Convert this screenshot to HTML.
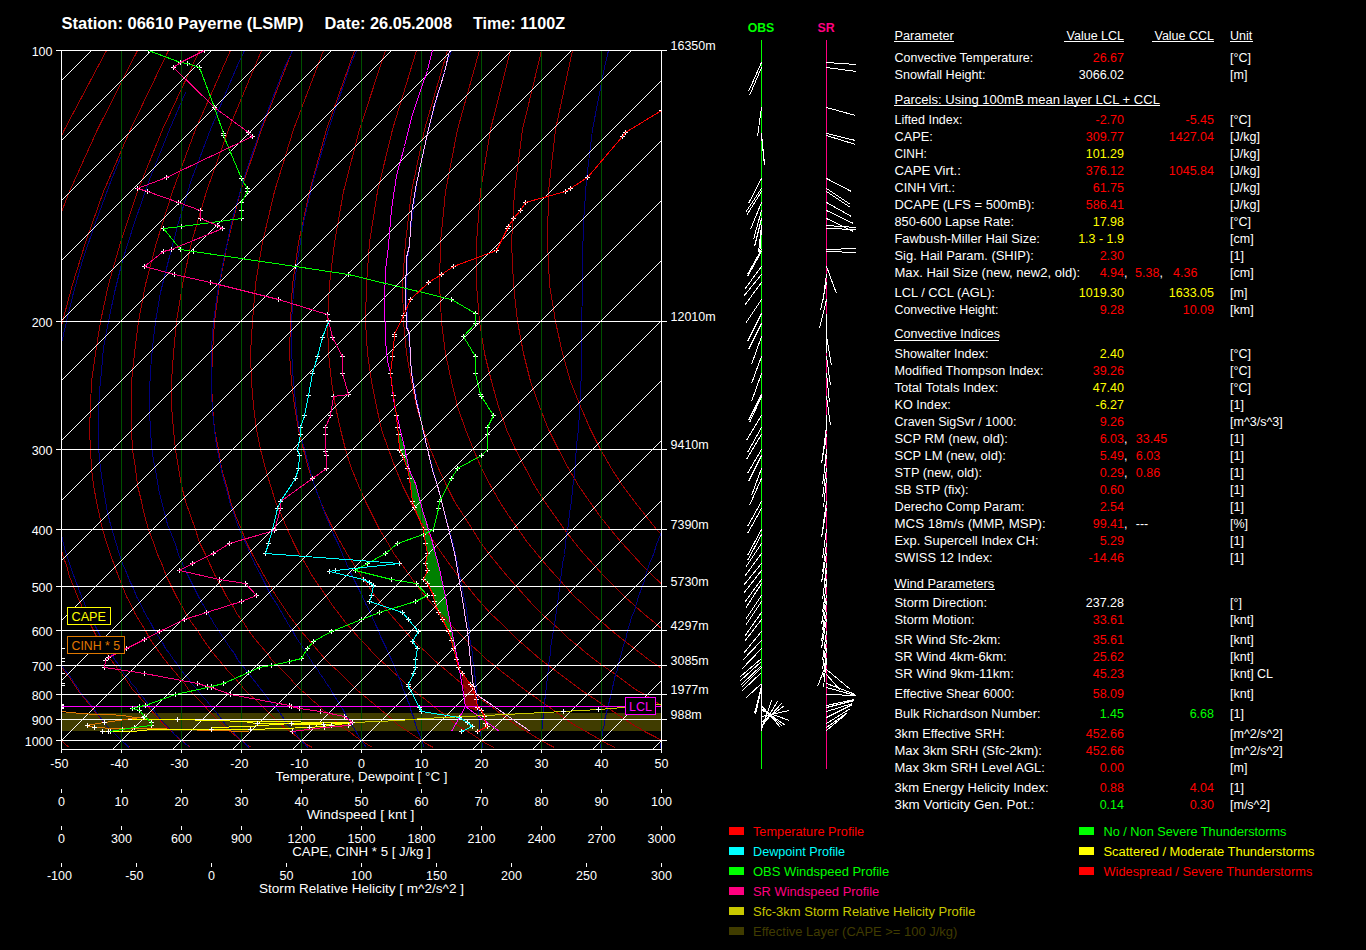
<!DOCTYPE html><html><head><meta charset="utf-8"><style>html,body{margin:0;padding:0;background:#000;width:1366px;height:950px;overflow:hidden}svg{display:block}line,polyline,path,rect,polygon{shape-rendering:crispEdges}text{font-family:"Liberation Sans",sans-serif}</style></head><body>
<svg width="1366" height="950" viewBox="0 0 1366 950">
<rect width="1366" height="950" fill="#000"/>
<text x="61.5" y="28.6" fill="#fff" font-weight="bold" font-size="16.5" textLength="242" lengthAdjust="spacingAndGlyphs">Station: 06610 Payerne (LSMP)</text>
<text x="324.5" y="28.6" fill="#fff" font-weight="bold" font-size="16.5" textLength="127.5" lengthAdjust="spacingAndGlyphs">Date: 26.05.2008</text>
<text x="473" y="28.6" fill="#fff" font-weight="bold" font-size="16.5" textLength="92" lengthAdjust="spacingAndGlyphs">Time: 1100Z</text>
<defs><clipPath id="ch"><rect x="61" y="50" width="601" height="699"/></clipPath></defs>
<g clip-path="url(#ch)" fill="none">
<rect x="61" y="713" width="601" height="18" fill="#403c00"/>
<polygon points="397.5,427.5 398.5,434.5 399.5,450.5 402.5,455.5 407.5,468.5 409.5,478.5 412.5,501.5 414.5,507.5 423.5,529.5 425.5,543.5 427.5,553.5 425.5,563.5 427.5,570.5 423.5,579.5 427.5,583.5 433.5,595.5 434.5,601.5 438.5,612.5 442.5,619.5 448.5,631.5 451.5,640.5 453.5,648.5 456.5,659.5 457.5,659.5 457.5,659.5 450.5,624.5 445.5,596.5 438.5,564.5 434.5,550.5 431.5,538.5 423.5,513.5 415.5,483.5 409.5,470.5 404.5,447.5" fill="#008000" stroke="none"/>
<polygon points="461.5,671.5 470.5,684.5 476.5,699.5 477.5,711.5 465.5,706.5" fill="#800000" stroke="none"/>
</g>
<g clip-path="url(#ch)" fill="none" stroke-width="1">
<polyline stroke="#a00000" points="106.5,50.5 64.5,129.5 35.5,191.5 14.5,242.5 -1.5,284.5 -13.5,321.5 -21.5,353.5 -27.5,381.5 -32.5,406.5 -35.5,429.5 -37.5,449.5 -38.5,468.5 -38.5,485.5 -38.5,501.5 -37.5,515.5 -35.5,529.5 -34.5,542.5 -32.5,554.5 -30.5,565.5 -27.5,576.5 -25.5,586.5 -22.5,596.5 -19.5,605.5 -16.5,614.5 -13.5,622.5 -10.5,630.5 -7.5,638.5 -3.5,645.5 -0.5,652.5 3.5,659.5 6.5,665.5 10.5,671.5 13.5,677.5 17.5,683.5 21.5,689.5 24.5,694.5 28.5,699.5 31.5,704.5 35.5,709.5 39.5,714.5 42.5,719.5 46.5,724.5 50.5,728.5 53.5,732.5 57.5,736.5 61.5,740.5 65.5,744.5 69.5,747.5"/>
<polyline stroke="#a00000" points="137.5,50.5 97.5,129.5 69.5,191.5 49.5,242.5 35.5,284.5 24.5,321.5 17.5,353.5 12.5,381.5 8.5,406.5 6.5,429.5 5.5,449.5 5.5,468.5 5.5,485.5 6.5,501.5 8.5,515.5 10.5,529.5 12.5,542.5 15.5,554.5 18.5,565.5 21.5,576.5 24.5,586.5 27.5,596.5 30.5,605.5 34.5,614.5 37.5,622.5 41.5,630.5 45.5,638.5 49.5,645.5 53.5,652.5 56.5,659.5 60.5,665.5 64.5,671.5 69.5,677.5 73.5,683.5 77.5,689.5 81.5,694.5 85.5,699.5 89.5,704.5 93.5,709.5 97.5,714.5 101.5,719.5 105.5,724.5 109.5,728.5 113.5,732.5 117.5,736.5 121.5,740.5 125.5,744.5 130.5,747.5"/>
<polyline stroke="#a00000" points="168.5,50.5 130.5,129.5 103.5,191.5 85.5,242.5 72.5,284.5 62.5,321.5 56.5,353.5 52.5,381.5 49.5,406.5 48.5,429.5 47.5,449.5 48.5,468.5 49.5,485.5 51.5,501.5 53.5,515.5 56.5,529.5 59.5,542.5 62.5,554.5 66.5,565.5 69.5,576.5 73.5,586.5 77.5,596.5 81.5,605.5 85.5,614.5 89.5,622.5 93.5,630.5 97.5,638.5 101.5,645.5 106.5,652.5 110.5,659.5 115.5,665.5 119.5,671.5 124.5,677.5 128.5,683.5 132.5,689.5 137.5,694.5 141.5,699.5 146.5,704.5 150.5,709.5 154.5,714.5 159.5,719.5 163.5,724.5 168.5,728.5 172.5,732.5 176.5,736.5 181.5,740.5 186.5,744.5 190.5,747.5"/>
<polyline stroke="#a00000" points="199.5,50.5 162.5,129.5 137.5,191.5 120.5,242.5 108.5,284.5 100.5,321.5 95.5,353.5 91.5,381.5 90.5,406.5 89.5,429.5 90.5,449.5 91.5,468.5 93.5,485.5 96.5,501.5 99.5,515.5 102.5,529.5 106.5,542.5 110.5,554.5 114.5,565.5 118.5,576.5 122.5,586.5 126.5,596.5 131.5,605.5 135.5,614.5 140.5,622.5 145.5,630.5 149.5,638.5 154.5,645.5 159.5,652.5 164.5,659.5 169.5,665.5 174.5,671.5 179.5,677.5 184.5,683.5 188.5,689.5 193.5,694.5 198.5,699.5 203.5,704.5 207.5,709.5 212.5,714.5 217.5,719.5 222.5,724.5 226.5,728.5 231.5,732.5 236.5,736.5 241.5,740.5 246.5,744.5 251.5,747.5"/>
<polyline stroke="#a00000" points="230.5,50.5 195.5,129.5 172.5,191.5 156.5,242.5 145.5,284.5 138.5,321.5 134.5,353.5 131.5,381.5 131.5,406.5 131.5,429.5 132.5,449.5 135.5,468.5 137.5,485.5 141.5,501.5 144.5,515.5 148.5,529.5 153.5,542.5 157.5,554.5 162.5,565.5 166.5,576.5 171.5,586.5 176.5,596.5 181.5,605.5 186.5,614.5 191.5,622.5 197.5,630.5 202.5,638.5 207.5,645.5 212.5,652.5 218.5,659.5 223.5,665.5 228.5,671.5 234.5,677.5 239.5,683.5 244.5,689.5 249.5,694.5 255.5,699.5 260.5,704.5 265.5,709.5 270.5,714.5 275.5,719.5 280.5,724.5 285.5,728.5 291.5,732.5 296.5,736.5 301.5,740.5 306.5,744.5 312.5,747.5"/>
<polyline stroke="#a00000" points="261.5,50.5 228.5,129.5 206.5,191.5 191.5,242.5 182.5,284.5 176.5,321.5 173.5,353.5 171.5,381.5 171.5,406.5 173.5,429.5 175.5,449.5 178.5,468.5 181.5,485.5 185.5,501.5 190.5,515.5 195.5,529.5 199.5,542.5 205.5,554.5 210.5,565.5 215.5,576.5 221.5,586.5 226.5,596.5 232.5,605.5 237.5,614.5 243.5,622.5 248.5,630.5 254.5,638.5 260.5,645.5 266.5,652.5 271.5,659.5 277.5,665.5 283.5,671.5 289.5,677.5 294.5,683.5 300.5,689.5 306.5,694.5 311.5,699.5 317.5,704.5 322.5,709.5 328.5,714.5 333.5,719.5 339.5,724.5 344.5,728.5 350.5,732.5 355.5,736.5 361.5,740.5 367.5,744.5 372.5,747.5"/>
<polyline stroke="#a00000" points="292.5,50.5 261.5,129.5 240.5,191.5 227.5,242.5 219.5,284.5 214.5,321.5 212.5,353.5 211.5,381.5 212.5,406.5 214.5,429.5 218.5,449.5 221.5,468.5 226.5,485.5 230.5,501.5 235.5,515.5 241.5,529.5 246.5,542.5 252.5,554.5 258.5,565.5 264.5,576.5 270.5,586.5 276.5,596.5 282.5,605.5 288.5,614.5 294.5,622.5 300.5,630.5 307.5,638.5 313.5,645.5 319.5,652.5 325.5,659.5 331.5,665.5 338.5,671.5 344.5,677.5 350.5,683.5 356.5,689.5 362.5,694.5 368.5,699.5 374.5,704.5 380.5,709.5 386.5,714.5 392.5,719.5 397.5,724.5 403.5,728.5 409.5,732.5 415.5,736.5 421.5,740.5 427.5,744.5 433.5,747.5"/>
<polyline stroke="#a00000" points="323.5,50.5 293.5,129.5 274.5,191.5 262.5,242.5 255.5,284.5 252.5,321.5 250.5,353.5 251.5,381.5 253.5,406.5 256.5,429.5 260.5,449.5 265.5,468.5 270.5,485.5 275.5,501.5 281.5,515.5 287.5,529.5 293.5,542.5 299.5,554.5 306.5,565.5 312.5,576.5 319.5,586.5 326.5,596.5 332.5,605.5 339.5,614.5 345.5,622.5 352.5,630.5 359.5,638.5 366.5,645.5 372.5,652.5 379.5,659.5 386.5,665.5 392.5,671.5 399.5,677.5 405.5,683.5 412.5,689.5 418.5,694.5 425.5,699.5 431.5,704.5 437.5,709.5 444.5,714.5 450.5,719.5 456.5,724.5 462.5,728.5 469.5,732.5 475.5,736.5 481.5,740.5 487.5,744.5 494.5,747.5"/>
<polyline stroke="#a00000" points="354.5,50.5 326.5,129.5 309.5,191.5 298.5,242.5 292.5,284.5 290.5,321.5 289.5,353.5 291.5,381.5 294.5,406.5 298.5,429.5 303.5,449.5 308.5,468.5 314.5,485.5 320.5,501.5 326.5,515.5 333.5,529.5 340.5,542.5 347.5,554.5 354.5,565.5 361.5,576.5 368.5,586.5 375.5,596.5 383.5,605.5 390.5,614.5 397.5,622.5 404.5,630.5 411.5,638.5 418.5,645.5 426.5,652.5 433.5,659.5 440.5,665.5 447.5,671.5 454.5,677.5 461.5,683.5 468.5,689.5 475.5,694.5 481.5,699.5 488.5,704.5 495.5,709.5 501.5,714.5 508.5,719.5 515.5,724.5 521.5,728.5 528.5,732.5 534.5,736.5 541.5,740.5 548.5,744.5 554.5,747.5"/>
<polyline stroke="#a00000" points="385.5,50.5 359.5,129.5 343.5,191.5 334.5,242.5 329.5,284.5 327.5,321.5 328.5,353.5 331.5,381.5 335.5,406.5 340.5,429.5 345.5,449.5 351.5,468.5 358.5,485.5 365.5,501.5 372.5,515.5 379.5,529.5 387.5,542.5 394.5,554.5 402.5,565.5 410.5,576.5 417.5,586.5 425.5,596.5 433.5,605.5 441.5,614.5 448.5,622.5 456.5,630.5 464.5,638.5 471.5,645.5 479.5,652.5 486.5,659.5 494.5,665.5 501.5,671.5 509.5,677.5 516.5,683.5 524.5,689.5 531.5,694.5 538.5,699.5 545.5,704.5 552.5,709.5 559.5,714.5 566.5,719.5 573.5,724.5 580.5,728.5 587.5,732.5 594.5,736.5 601.5,740.5 608.5,744.5 615.5,747.5"/>
<polyline stroke="#a00000" points="416.5,50.5 392.5,129.5 377.5,191.5 369.5,242.5 366.5,284.5 365.5,321.5 367.5,353.5 371.5,381.5 376.5,406.5 381.5,429.5 388.5,449.5 395.5,468.5 402.5,485.5 410.5,501.5 417.5,515.5 425.5,529.5 434.5,542.5 442.5,554.5 450.5,565.5 458.5,576.5 467.5,586.5 475.5,596.5 483.5,605.5 491.5,614.5 500.5,622.5 508.5,630.5 516.5,638.5 524.5,645.5 532.5,652.5 540.5,659.5 548.5,665.5 556.5,671.5 564.5,677.5 572.5,683.5 580.5,689.5 587.5,694.5 595.5,699.5 602.5,704.5 610.5,709.5 617.5,714.5 625.5,719.5 632.5,724.5 639.5,728.5 646.5,732.5 654.5,736.5 661.5,740.5 668.5,744.5 676.5,747.5"/>
<polyline stroke="#a00000" points="447.5,50.5 424.5,129.5 411.5,191.5 405.5,242.5 402.5,284.5 403.5,321.5 406.5,353.5 411.5,381.5 416.5,406.5 423.5,429.5 430.5,449.5 438.5,468.5 446.5,485.5 454.5,501.5 463.5,515.5 472.5,529.5 480.5,542.5 489.5,554.5 498.5,565.5 507.5,576.5 516.5,586.5 525.5,596.5 533.5,605.5 542.5,614.5 551.5,622.5 560.5,630.5 568.5,638.5 577.5,645.5 585.5,652.5 594.5,659.5 602.5,665.5 611.5,671.5 619.5,677.5 627.5,683.5 635.5,689.5 644.5,694.5 652.5,699.5 659.5,704.5 667.5,709.5 675.5,714.5 683.5,719.5 690.5,724.5 698.5,728.5 706.5,732.5 713.5,736.5 721.5,740.5 729.5,744.5 736.5,747.5"/>
<polyline stroke="#a00000" points="479.5,50.5 457.5,129.5 445.5,191.5 440.5,242.5 439.5,284.5 441.5,321.5 445.5,353.5 451.5,381.5 457.5,406.5 465.5,429.5 473.5,449.5 481.5,468.5 490.5,485.5 499.5,501.5 508.5,515.5 518.5,529.5 527.5,542.5 537.5,554.5 546.5,565.5 556.5,576.5 565.5,586.5 574.5,596.5 584.5,605.5 593.5,614.5 602.5,622.5 611.5,630.5 621.5,638.5 630.5,645.5 639.5,652.5 648.5,659.5 657.5,665.5 665.5,671.5 674.5,677.5 683.5,683.5 691.5,689.5 700.5,694.5 708.5,699.5 716.5,704.5 725.5,709.5 733.5,714.5 741.5,719.5 749.5,724.5 757.5,728.5 765.5,732.5 773.5,736.5 781.5,740.5 789.5,744.5 797.5,747.5"/>
<polyline stroke="#a00000" points="510.5,50.5 490.5,129.5 480.5,191.5 476.5,242.5 476.5,284.5 479.5,321.5 484.5,353.5 491.5,381.5 498.5,406.5 506.5,429.5 515.5,449.5 525.5,468.5 534.5,485.5 544.5,501.5 554.5,515.5 564.5,529.5 574.5,542.5 584.5,554.5 594.5,565.5 604.5,576.5 614.5,586.5 624.5,596.5 634.5,605.5 644.5,614.5 654.5,622.5 663.5,630.5 673.5,638.5 682.5,645.5 692.5,652.5 701.5,659.5 711.5,665.5 720.5,671.5 729.5,677.5 738.5,683.5 747.5,689.5 756.5,694.5 765.5,699.5 774.5,704.5 782.5,709.5 791.5,714.5 799.5,719.5 808.5,724.5 816.5,728.5 824.5,732.5 833.5,736.5 841.5,740.5 849.5,744.5 858.5,747.5"/>
<polyline stroke="#a00000" points="541.5,50.5 522.5,129.5 514.5,191.5 511.5,242.5 513.5,284.5 517.5,321.5 523.5,353.5 530.5,381.5 539.5,406.5 548.5,429.5 558.5,449.5 568.5,468.5 578.5,485.5 589.5,501.5 599.5,515.5 610.5,529.5 621.5,542.5 632.5,554.5 642.5,565.5 653.5,576.5 664.5,586.5 674.5,596.5 684.5,605.5 695.5,614.5 705.5,622.5 715.5,630.5 725.5,638.5 735.5,645.5 745.5,652.5 755.5,659.5 765.5,665.5 775.5,671.5 784.5,677.5 794.5,683.5 803.5,689.5 812.5,694.5 822.5,699.5 831.5,704.5 840.5,709.5 849.5,714.5 857.5,719.5 866.5,724.5 875.5,728.5 884.5,732.5 892.5,736.5 901.5,740.5 910.5,744.5 918.5,747.5"/>
<polyline stroke="#a00000" points="572.5,50.5 555.5,129.5 548.5,191.5 547.5,242.5 549.5,284.5 555.5,321.5 562.5,353.5 570.5,381.5 580.5,406.5 590.5,429.5 600.5,449.5 611.5,468.5 622.5,485.5 634.5,501.5 645.5,515.5 656.5,529.5 668.5,542.5 679.5,554.5 690.5,565.5 702.5,576.5 713.5,586.5 724.5,596.5 735.5,605.5 746.5,614.5 756.5,622.5 767.5,630.5 778.5,638.5 788.5,645.5 799.5,652.5 809.5,659.5 819.5,665.5 829.5,671.5 839.5,677.5 849.5,683.5 859.5,689.5 869.5,694.5 878.5,699.5 888.5,704.5 897.5,709.5 906.5,714.5 916.5,719.5 925.5,724.5 934.5,728.5 943.5,732.5 952.5,736.5 961.5,740.5 970.5,744.5 979.5,747.5"/>
<polyline stroke="#000080" points="129.5,747.5 127.5,746.5 126.5,744.5 124.5,743.5 123.5,742.5 121.5,740.5 118.5,737.5 115.5,734.5 111.5,730.5 108.5,727.5 105.5,724.5 102.5,720.5 99.5,716.5 96.5,712.5 93.5,708.5 90.5,704.5 87.5,700.5 83.5,696.5 80.5,692.5 77.5,687.5 74.5,683.5 71.5,678.5 68.5,674.5 64.5,669.5 61.5,664.5 58.5,659.5 55.5,653.5 52.5,648.5 49.5,642.5 46.5,636.5 43.5,630.5 40.5,624.5 37.5,617.5 34.5,610.5 31.5,603.5 29.5,596.5 26.5,588.5 23.5,580.5 21.5,572.5 19.5,563.5 16.5,554.5 14.5,544.5 12.5,534.5 11.5,524.5 9.5,512.5 8.5,501.5 7.5,488.5 6.5,475.5 6.5,460.5 7.5,445.5 7.5,429.5 9.5,411.5 12.5,391.5 15.5,370.5 20.5,347.5 26.5,321.5 34.5,292.5 44.5,260.5 58.5,222.5 60.5,217.5"/>
<polyline stroke="#000080" points="189.5,747.5 188.5,746.5 186.5,744.5 184.5,743.5 183.5,742.5 181.5,740.5 178.5,737.5 174.5,734.5 171.5,730.5 168.5,727.5 165.5,724.5 161.5,720.5 158.5,716.5 155.5,712.5 152.5,708.5 148.5,704.5 145.5,700.5 142.5,696.5 138.5,692.5 135.5,687.5 131.5,683.5 128.5,678.5 124.5,674.5 121.5,669.5 118.5,664.5 114.5,659.5 111.5,653.5 107.5,648.5 104.5,642.5 100.5,636.5 97.5,630.5 94.5,624.5 90.5,617.5 87.5,610.5 84.5,603.5 81.5,596.5 78.5,588.5 75.5,580.5 72.5,572.5 69.5,563.5 66.5,554.5 63.5,544.5 61.5,534.5 59.5,524.5 57.5,512.5 55.5,501.5 53.5,488.5 52.5,475.5 51.5,460.5 51.5,445.5 51.5,429.5 52.5,411.5 54.5,391.5 56.5,370.5 60.5,347.5 66.5,321.5 73.5,292.5 82.5,260.5 95.5,222.5 111.5,179.5 121.5,155.5"/>
<polyline stroke="#000080" points="249.5,747.5 247.5,746.5 246.5,744.5 244.5,743.5 243.5,742.5 241.5,740.5 238.5,737.5 235.5,734.5 232.5,730.5 228.5,727.5 225.5,724.5 222.5,720.5 219.5,716.5 216.5,712.5 212.5,708.5 209.5,704.5 206.5,700.5 202.5,696.5 199.5,692.5 195.5,687.5 191.5,683.5 188.5,678.5 184.5,674.5 180.5,669.5 177.5,664.5 173.5,659.5 169.5,653.5 165.5,648.5 162.5,642.5 158.5,636.5 154.5,630.5 151.5,624.5 147.5,617.5 143.5,610.5 140.5,603.5 136.5,596.5 133.5,588.5 129.5,580.5 126.5,572.5 122.5,563.5 119.5,554.5 116.5,544.5 113.5,534.5 110.5,524.5 107.5,512.5 105.5,501.5 103.5,488.5 101.5,475.5 99.5,460.5 98.5,445.5 98.5,429.5 98.5,411.5 99.5,391.5 101.5,370.5 103.5,347.5 108.5,321.5 114.5,292.5 122.5,260.5 134.5,222.5 149.5,179.5 169.5,129.5 185.5,92.5"/>
<polyline stroke="#000080" points="308.5,747.5 306.5,746.5 305.5,744.5 304.5,743.5 302.5,742.5 301.5,740.5 298.5,737.5 296.5,734.5 293.5,730.5 290.5,727.5 287.5,724.5 284.5,720.5 282.5,716.5 279.5,712.5 276.5,708.5 272.5,704.5 269.5,700.5 266.5,696.5 263.5,692.5 259.5,687.5 256.5,683.5 252.5,678.5 249.5,674.5 245.5,669.5 241.5,664.5 237.5,659.5 234.5,653.5 230.5,648.5 226.5,642.5 222.5,636.5 218.5,630.5 214.5,624.5 210.5,617.5 206.5,610.5 202.5,603.5 198.5,596.5 194.5,588.5 190.5,580.5 186.5,572.5 182.5,563.5 178.5,554.5 175.5,544.5 171.5,534.5 167.5,524.5 164.5,512.5 161.5,501.5 158.5,488.5 156.5,475.5 153.5,460.5 151.5,445.5 150.5,429.5 149.5,411.5 149.5,391.5 150.5,370.5 152.5,347.5 155.5,321.5 160.5,292.5 168.5,260.5 178.5,222.5 191.5,179.5 210.5,129.5 236.5,67.5 244.5,50.5"/>
<polyline stroke="#000080" points="366.5,747.5 365.5,746.5 364.5,744.5 363.5,743.5 362.5,742.5 361.5,740.5 359.5,737.5 357.5,734.5 355.5,730.5 353.5,727.5 351.5,724.5 349.5,720.5 346.5,716.5 344.5,712.5 342.5,708.5 339.5,704.5 337.5,700.5 334.5,696.5 332.5,692.5 329.5,687.5 326.5,683.5 323.5,678.5 320.5,674.5 317.5,669.5 313.5,664.5 310.5,659.5 306.5,653.5 303.5,648.5 299.5,642.5 295.5,636.5 292.5,630.5 288.5,624.5 284.5,617.5 280.5,610.5 276.5,603.5 271.5,596.5 267.5,588.5 263.5,580.5 259.5,572.5 254.5,563.5 250.5,554.5 246.5,544.5 241.5,534.5 237.5,524.5 233.5,512.5 229.5,501.5 226.5,488.5 222.5,475.5 219.5,460.5 216.5,445.5 214.5,429.5 212.5,411.5 211.5,391.5 211.5,370.5 211.5,347.5 213.5,321.5 217.5,292.5 223.5,260.5 231.5,222.5 243.5,179.5 260.5,129.5 284.5,67.5 292.5,50.5"/>
<polyline stroke="#000080" points="424.5,747.5 423.5,746.5 423.5,744.5 422.5,743.5 422.5,742.5 421.5,740.5 420.5,737.5 419.5,734.5 417.5,730.5 416.5,727.5 415.5,724.5 414.5,720.5 413.5,716.5 411.5,712.5 410.5,708.5 409.5,704.5 407.5,700.5 406.5,696.5 404.5,692.5 402.5,687.5 401.5,683.5 399.5,678.5 397.5,674.5 395.5,669.5 393.5,664.5 391.5,659.5 388.5,653.5 386.5,648.5 383.5,642.5 380.5,636.5 378.5,630.5 375.5,624.5 372.5,617.5 369.5,610.5 365.5,603.5 362.5,596.5 358.5,588.5 354.5,580.5 350.5,572.5 346.5,563.5 342.5,554.5 338.5,544.5 333.5,534.5 329.5,524.5 324.5,512.5 320.5,501.5 315.5,488.5 311.5,475.5 307.5,460.5 303.5,445.5 299.5,429.5 296.5,411.5 294.5,391.5 292.5,370.5 291.5,347.5 291.5,321.5 293.5,292.5 297.5,260.5 303.5,222.5 313.5,179.5 328.5,129.5 349.5,67.5 356.5,50.5"/>
<polyline stroke="#000080" points="482.5,747.5 482.5,746.5 482.5,744.5 482.5,743.5 481.5,742.5 481.5,740.5 481.5,737.5 480.5,734.5 480.5,730.5 479.5,727.5 479.5,724.5 479.5,720.5 478.5,716.5 478.5,712.5 478.5,708.5 477.5,704.5 477.5,700.5 477.5,696.5 476.5,692.5 476.5,687.5 475.5,683.5 475.5,678.5 474.5,674.5 474.5,669.5 473.5,664.5 472.5,659.5 472.5,653.5 471.5,648.5 470.5,642.5 469.5,636.5 469.5,630.5 468.5,624.5 467.5,617.5 466.5,610.5 465.5,603.5 463.5,596.5 462.5,588.5 460.5,580.5 459.5,572.5 457.5,563.5 455.5,554.5 453.5,544.5 450.5,534.5 447.5,524.5 444.5,512.5 441.5,501.5 438.5,488.5 434.5,475.5 430.5,460.5 426.5,445.5 422.5,429.5 419.5,411.5 415.5,391.5 411.5,370.5 409.5,347.5 407.5,321.5 406.5,292.5 407.5,260.5 411.5,222.5 417.5,179.5 428.5,129.5 445.5,67.5 451.5,50.5"/>
<polyline stroke="#000080" points="541.5,747.5 541.5,746.5 541.5,744.5 541.5,743.5 541.5,742.5 541.5,740.5 541.5,737.5 541.5,734.5 541.5,730.5 542.5,727.5 542.5,724.5 542.5,720.5 543.5,716.5 543.5,712.5 543.5,708.5 544.5,704.5 544.5,700.5 545.5,696.5 545.5,692.5 546.5,687.5 546.5,683.5 547.5,678.5 547.5,674.5 548.5,669.5 548.5,664.5 549.5,659.5 550.5,653.5 550.5,648.5 551.5,642.5 552.5,636.5 553.5,630.5 554.5,624.5 555.5,617.5 556.5,610.5 557.5,603.5 558.5,596.5 559.5,588.5 560.5,580.5 561.5,572.5 562.5,563.5 564.5,554.5 565.5,544.5 566.5,534.5 568.5,524.5 569.5,512.5 571.5,501.5 572.5,488.5 574.5,475.5 575.5,460.5 576.5,445.5 578.5,429.5 579.5,411.5 580.5,391.5 581.5,370.5 581.5,347.5 581.5,321.5 582.5,292.5 582.5,260.5 583.5,222.5 586.5,179.5 592.5,129.5 604.5,67.5 608.5,50.5"/>
<polyline stroke="#000080" points="600.5,747.5 600.5,746.5 600.5,744.5 601.5,743.5 601.5,742.5 601.5,740.5 601.5,737.5 602.5,734.5 602.5,730.5 603.5,727.5 604.5,724.5 604.5,720.5 605.5,716.5 606.5,712.5 607.5,708.5 608.5,704.5 609.5,700.5 610.5,696.5 611.5,692.5 612.5,687.5 613.5,683.5 614.5,678.5 615.5,674.5 617.5,669.5 618.5,664.5 619.5,659.5 621.5,653.5 622.5,648.5 624.5,642.5 626.5,636.5 627.5,630.5 629.5,624.5 631.5,617.5 634.5,610.5 636.5,603.5 638.5,596.5 641.5,588.5 644.5,580.5 646.5,572.5 649.5,563.5 653.5,554.5 656.5,544.5 660.5,534.5 663.5,524.5 668.5,512.5 672.5,501.5 677.5,488.5 682.5,475.5 688.5,460.5 694.5,445.5 701.5,429.5 708.5,411.5 717.5,391.5 726.5,370.5 736.5,347.5 747.5,321.5 759.5,292.5 774.5,260.5 790.5,222.5 808.5,179.5 829.5,129.5 852.5,67.5 859.5,50.5"/>
<polyline stroke="#000080" points="660.5,747.5 660.5,746.5 660.5,744.5 660.5,743.5 661.5,742.5 661.5,740.5 662.5,737.5 662.5,734.5 663.5,730.5 664.5,727.5 665.5,724.5 666.5,720.5 667.5,716.5 668.5,712.5 669.5,708.5 670.5,704.5 672.5,700.5 673.5,696.5 674.5,692.5 675.5,687.5 677.5,683.5 678.5,678.5 680.5,674.5 681.5,669.5 683.5,664.5 685.5,659.5 687.5,653.5 689.5,648.5 691.5,642.5 693.5,636.5 695.5,630.5 698.5,624.5 700.5,617.5 703.5,610.5 706.5,603.5 709.5,596.5 712.5,588.5 716.5,580.5 719.5,572.5 723.5,563.5 727.5,554.5 731.5,544.5 736.5,534.5 741.5,524.5 746.5,512.5 752.5,501.5 758.5,488.5 765.5,475.5 772.5,460.5 780.5,445.5 789.5,429.5 799.5,411.5 809.5,391.5 821.5,370.5 835.5,347.5 850.5,321.5 868.5,292.5 888.5,260.5 911.5,222.5 939.5,179.5 972.5,129.5 1014.5,67.5 1025.5,50.5"/>
<line x1="121.5" y1="50" x2="121.5" y2="749" stroke="#005000"/>
<line x1="181.5" y1="50" x2="181.5" y2="749" stroke="#005000"/>
<line x1="241.5" y1="50" x2="241.5" y2="749" stroke="#005000"/>
<line x1="301.5" y1="50" x2="301.5" y2="749" stroke="#005000"/>
<line x1="361.5" y1="50" x2="361.5" y2="749" stroke="#005000"/>
<line x1="421.5" y1="50" x2="421.5" y2="749" stroke="#005000"/>
<line x1="481.5" y1="50" x2="481.5" y2="749" stroke="#005000"/>
<line x1="541.5" y1="50" x2="541.5" y2="749" stroke="#005000"/>
<line x1="601.5" y1="50" x2="601.5" y2="749" stroke="#005000"/>
<line x1="92" y1="50" x2="-607" y2="749" stroke="#fff"/>
<line x1="152" y1="50" x2="-547" y2="749" stroke="#fff"/>
<line x1="212" y1="50" x2="-487" y2="749" stroke="#fff"/>
<line x1="272" y1="50" x2="-427" y2="749" stroke="#fff"/>
<line x1="332" y1="50" x2="-367" y2="749" stroke="#fff"/>
<line x1="392" y1="50" x2="-307" y2="749" stroke="#fff"/>
<line x1="452" y1="50" x2="-247" y2="749" stroke="#fff"/>
<line x1="512" y1="50" x2="-187" y2="749" stroke="#fff"/>
<line x1="572" y1="50" x2="-127" y2="749" stroke="#fff"/>
<line x1="632" y1="50" x2="-67" y2="749" stroke="#fff"/>
<line x1="692" y1="50" x2="-7" y2="749" stroke="#fff"/>
<line x1="752" y1="50" x2="53" y2="749" stroke="#fff"/>
<line x1="812" y1="50" x2="113" y2="749" stroke="#fff"/>
<line x1="872" y1="50" x2="173" y2="749" stroke="#fff"/>
<line x1="932" y1="50" x2="233" y2="749" stroke="#fff"/>
<line x1="992" y1="50" x2="293" y2="749" stroke="#fff"/>
<line x1="1052" y1="50" x2="353" y2="749" stroke="#fff"/>
<line x1="1112" y1="50" x2="413" y2="749" stroke="#fff"/>
<line x1="1172" y1="50" x2="473" y2="749" stroke="#fff"/>
<line x1="1232" y1="50" x2="533" y2="749" stroke="#fff"/>
<line x1="1292" y1="50" x2="593" y2="749" stroke="#fff"/>
<line x1="1352" y1="50" x2="653" y2="749" stroke="#fff"/>
<line x1="1412" y1="50" x2="713" y2="749" stroke="#fff"/>
<line x1="1472" y1="50" x2="773" y2="749" stroke="#fff"/>
<line x1="1532" y1="50" x2="833" y2="749" stroke="#fff"/>
</g>
<line x1="56" y1="50.5" x2="667" y2="50.5" stroke="#fff"/>
<text x="52.5" y="55.5" fill="#fff" font-size="12.5" text-anchor="end">100</text>
<line x1="56" y1="321.5" x2="667" y2="321.5" stroke="#fff"/>
<text x="52.5" y="326.5" fill="#fff" font-size="12.5" text-anchor="end">200</text>
<line x1="56" y1="449.5" x2="667" y2="449.5" stroke="#fff"/>
<text x="52.5" y="454.5" fill="#fff" font-size="12.5" text-anchor="end">300</text>
<line x1="56" y1="529.5" x2="667" y2="529.5" stroke="#fff"/>
<text x="52.5" y="534.5" fill="#fff" font-size="12.5" text-anchor="end">400</text>
<line x1="56" y1="586.5" x2="667" y2="586.5" stroke="#fff"/>
<text x="52.5" y="591.5" fill="#fff" font-size="12.5" text-anchor="end">500</text>
<line x1="56" y1="630.5" x2="667" y2="630.5" stroke="#fff"/>
<text x="52.5" y="635.5" fill="#fff" font-size="12.5" text-anchor="end">600</text>
<line x1="56" y1="665.5" x2="667" y2="665.5" stroke="#fff"/>
<text x="52.5" y="670.5" fill="#fff" font-size="12.5" text-anchor="end">700</text>
<line x1="56" y1="694.5" x2="667" y2="694.5" stroke="#fff"/>
<text x="52.5" y="699.5" fill="#fff" font-size="12.5" text-anchor="end">800</text>
<line x1="56" y1="719.5" x2="667" y2="719.5" stroke="#fff"/>
<text x="52.5" y="724.5" fill="#fff" font-size="12.5" text-anchor="end">900</text>
<line x1="56" y1="740.5" x2="667" y2="740.5" stroke="#fff"/>
<text x="52.5" y="745.5" fill="#fff" font-size="12.5" text-anchor="end">1000</text>
<rect x="61.5" y="50.5" width="600" height="698.5" fill="none" stroke="#fff"/>
<text x="670.5" y="49.5" fill="#fff" font-size="12.5">16350m</text>
<text x="670.5" y="320.5" fill="#fff" font-size="12.5">12010m</text>
<text x="670.5" y="448.5" fill="#fff" font-size="12.5">9410m</text>
<text x="670.5" y="528.5" fill="#fff" font-size="12.5">7390m</text>
<text x="670.5" y="585.5" fill="#fff" font-size="12.5">5730m</text>
<text x="670.5" y="629.5" fill="#fff" font-size="12.5">4297m</text>
<text x="670.5" y="664.5" fill="#fff" font-size="12.5">3085m</text>
<text x="670.5" y="693.5" fill="#fff" font-size="12.5">1977m</text>
<text x="670.5" y="718.5" fill="#fff" font-size="12.5">988m</text>
<line x1="61.5" y1="749" x2="61.5" y2="753" stroke="#fff"/>
<text x="59.4" y="767.5" fill="#fff" font-size="12.5" text-anchor="middle">-50</text>
<line x1="121.5" y1="749" x2="121.5" y2="753" stroke="#fff"/>
<text x="119.4" y="767.5" fill="#fff" font-size="12.5" text-anchor="middle">-40</text>
<line x1="181.5" y1="749" x2="181.5" y2="753" stroke="#fff"/>
<text x="179.4" y="767.5" fill="#fff" font-size="12.5" text-anchor="middle">-30</text>
<line x1="241.5" y1="749" x2="241.5" y2="753" stroke="#fff"/>
<text x="239.4" y="767.5" fill="#fff" font-size="12.5" text-anchor="middle">-20</text>
<line x1="301.5" y1="749" x2="301.5" y2="753" stroke="#fff"/>
<text x="299.4" y="767.5" fill="#fff" font-size="12.5" text-anchor="middle">-10</text>
<line x1="361.5" y1="749" x2="361.5" y2="753" stroke="#fff"/>
<text x="361.5" y="767.5" fill="#fff" font-size="12.5" text-anchor="middle">0</text>
<line x1="421.5" y1="749" x2="421.5" y2="753" stroke="#fff"/>
<text x="421.5" y="767.5" fill="#fff" font-size="12.5" text-anchor="middle">10</text>
<line x1="481.5" y1="749" x2="481.5" y2="753" stroke="#fff"/>
<text x="481.5" y="767.5" fill="#fff" font-size="12.5" text-anchor="middle">20</text>
<line x1="541.5" y1="749" x2="541.5" y2="753" stroke="#fff"/>
<text x="541.5" y="767.5" fill="#fff" font-size="12.5" text-anchor="middle">30</text>
<line x1="601.5" y1="749" x2="601.5" y2="753" stroke="#fff"/>
<text x="601.5" y="767.5" fill="#fff" font-size="12.5" text-anchor="middle">40</text>
<line x1="661.5" y1="749" x2="661.5" y2="753" stroke="#fff"/>
<text x="661.5" y="767.5" fill="#fff" font-size="12.5" text-anchor="middle">50</text>
<text x="361.5" y="780.5" fill="#fff" font-size="12.5" text-anchor="middle" textLength="172" lengthAdjust="spacingAndGlyphs">Temperature, Dewpoint [ °C ]</text>
<line x1="61.5" y1="789" x2="61.5" y2="793" stroke="#fff"/>
<text x="61.5" y="805.5" fill="#fff" font-size="12.5" text-anchor="middle">0</text>
<line x1="121.5" y1="789" x2="121.5" y2="793" stroke="#fff"/>
<text x="121.5" y="805.5" fill="#fff" font-size="12.5" text-anchor="middle">10</text>
<line x1="181.5" y1="789" x2="181.5" y2="793" stroke="#fff"/>
<text x="181.5" y="805.5" fill="#fff" font-size="12.5" text-anchor="middle">20</text>
<line x1="241.5" y1="789" x2="241.5" y2="793" stroke="#fff"/>
<text x="241.5" y="805.5" fill="#fff" font-size="12.5" text-anchor="middle">30</text>
<line x1="301.5" y1="789" x2="301.5" y2="793" stroke="#fff"/>
<text x="301.5" y="805.5" fill="#fff" font-size="12.5" text-anchor="middle">40</text>
<line x1="361.5" y1="789" x2="361.5" y2="793" stroke="#fff"/>
<text x="361.5" y="805.5" fill="#fff" font-size="12.5" text-anchor="middle">50</text>
<line x1="421.5" y1="789" x2="421.5" y2="793" stroke="#fff"/>
<text x="421.5" y="805.5" fill="#fff" font-size="12.5" text-anchor="middle">60</text>
<line x1="481.5" y1="789" x2="481.5" y2="793" stroke="#fff"/>
<text x="481.5" y="805.5" fill="#fff" font-size="12.5" text-anchor="middle">70</text>
<line x1="541.5" y1="789" x2="541.5" y2="793" stroke="#fff"/>
<text x="541.5" y="805.5" fill="#fff" font-size="12.5" text-anchor="middle">80</text>
<line x1="601.5" y1="789" x2="601.5" y2="793" stroke="#fff"/>
<text x="601.5" y="805.5" fill="#fff" font-size="12.5" text-anchor="middle">90</text>
<line x1="661.5" y1="789" x2="661.5" y2="793" stroke="#fff"/>
<text x="661.5" y="805.5" fill="#fff" font-size="12.5" text-anchor="middle">100</text>
<text x="360.5" y="818.5" fill="#fff" font-size="12.5" text-anchor="middle" textLength="107.6" lengthAdjust="spacingAndGlyphs">Windspeed [ knt ]</text>
<line x1="61.5" y1="826" x2="61.5" y2="830" stroke="#fff"/>
<text x="61.5" y="843" fill="#fff" font-size="12.5" text-anchor="middle">0</text>
<line x1="121.5" y1="826" x2="121.5" y2="830" stroke="#fff"/>
<text x="121.5" y="843" fill="#fff" font-size="12.5" text-anchor="middle">300</text>
<line x1="181.5" y1="826" x2="181.5" y2="830" stroke="#fff"/>
<text x="181.5" y="843" fill="#fff" font-size="12.5" text-anchor="middle">600</text>
<line x1="241.5" y1="826" x2="241.5" y2="830" stroke="#fff"/>
<text x="241.5" y="843" fill="#fff" font-size="12.5" text-anchor="middle">900</text>
<line x1="301.5" y1="826" x2="301.5" y2="830" stroke="#fff"/>
<text x="301.5" y="843" fill="#fff" font-size="12.5" text-anchor="middle">1200</text>
<line x1="361.5" y1="826" x2="361.5" y2="830" stroke="#fff"/>
<text x="361.5" y="843" fill="#fff" font-size="12.5" text-anchor="middle">1500</text>
<line x1="421.5" y1="826" x2="421.5" y2="830" stroke="#fff"/>
<text x="421.5" y="843" fill="#fff" font-size="12.5" text-anchor="middle">1800</text>
<line x1="481.5" y1="826" x2="481.5" y2="830" stroke="#fff"/>
<text x="481.5" y="843" fill="#fff" font-size="12.5" text-anchor="middle">2100</text>
<line x1="541.5" y1="826" x2="541.5" y2="830" stroke="#fff"/>
<text x="541.5" y="843" fill="#fff" font-size="12.5" text-anchor="middle">2400</text>
<line x1="601.5" y1="826" x2="601.5" y2="830" stroke="#fff"/>
<text x="601.5" y="843" fill="#fff" font-size="12.5" text-anchor="middle">2700</text>
<line x1="661.5" y1="826" x2="661.5" y2="830" stroke="#fff"/>
<text x="661.5" y="843" fill="#fff" font-size="12.5" text-anchor="middle">3000</text>
<text x="361.5" y="856" fill="#fff" font-size="12.5" text-anchor="middle" textLength="138.5" lengthAdjust="spacingAndGlyphs">CAPE, CINH * 5 [ J/kg ]</text>
<line x1="61.5" y1="863" x2="61.5" y2="867" stroke="#fff"/>
<text x="59.4" y="880" fill="#fff" font-size="12.5" text-anchor="middle">-100</text>
<line x1="136.5" y1="863" x2="136.5" y2="867" stroke="#fff"/>
<text x="134.4" y="880" fill="#fff" font-size="12.5" text-anchor="middle">-50</text>
<line x1="211.5" y1="863" x2="211.5" y2="867" stroke="#fff"/>
<text x="211.5" y="880" fill="#fff" font-size="12.5" text-anchor="middle">0</text>
<line x1="286.5" y1="863" x2="286.5" y2="867" stroke="#fff"/>
<text x="286.5" y="880" fill="#fff" font-size="12.5" text-anchor="middle">50</text>
<line x1="361.5" y1="863" x2="361.5" y2="867" stroke="#fff"/>
<text x="361.5" y="880" fill="#fff" font-size="12.5" text-anchor="middle">100</text>
<line x1="436.5" y1="863" x2="436.5" y2="867" stroke="#fff"/>
<text x="436.5" y="880" fill="#fff" font-size="12.5" text-anchor="middle">150</text>
<line x1="511.5" y1="863" x2="511.5" y2="867" stroke="#fff"/>
<text x="511.5" y="880" fill="#fff" font-size="12.5" text-anchor="middle">200</text>
<line x1="586.5" y1="863" x2="586.5" y2="867" stroke="#fff"/>
<text x="586.5" y="880" fill="#fff" font-size="12.5" text-anchor="middle">250</text>
<line x1="661.5" y1="863" x2="661.5" y2="867" stroke="#fff"/>
<text x="661.5" y="880" fill="#fff" font-size="12.5" text-anchor="middle">300</text>
<text x="361.5" y="893" fill="#fff" font-size="12.5" text-anchor="middle" textLength="205" lengthAdjust="spacingAndGlyphs">Storm Relative Helicity [ m^2/s^2 ]</text>
<g clip-path="url(#ch)" fill="none">
<line x1="61" y1="706.5" x2="661" y2="706.5" stroke="#ff00ff"/>
<polyline points="432.5,50.5 427.5,70.5 421.5,87.5 412.5,114.5 404.5,146.5 396.5,175.5 391.5,209.5 388.5,245.5 385.5,270.5 384.5,300.5 385.5,340.5 387.5,360.5 390.5,373.5 394.5,405.5 404.5,447.5 409.5,470.5 415.5,483.5 423.5,513.5 431.5,538.5 434.5,550.5 438.5,564.5 445.5,596.5 450.5,624.5 457.5,659.5 459.5,669.5 465.5,706.5" stroke="#ff00ff"/>
<polyline points="465.5,706.5 451.5,731.5" stroke="#ff00ff"/>
<polyline points="465.5,706.5 499.5,731.5" stroke="#ff00ff"/>
<polyline points="449.5,50.5 444.5,72.5 434.5,104.5 427.5,133.5 421.5,160.5 415.5,188.5 411.5,213.5 409.5,245.5 406.5,257.5 405.5,294.5 406.5,327.5 409.5,333.5 410.5,360.5 412.5,380.5 416.5,402.5 419.5,414.5 432.5,470.5 437.5,485.5 448.5,528.5 455.5,557.5 462.5,599.5 467.5,631.5 472.5,679.5 473.5,685.5 476.5,694.5 530.5,731.5" stroke="#ffb4ff"/>
<polyline points="353.5,722.5 376.5,721.5 399.5,720.5 423.5,718.5 466.5,716.5 563.5,711.5 598.5,709.5 661.5,704.5" stroke="#c8c800"/>
<polyline points="62.5,711.5 68.5,712.5 82.5,713.5 95.5,714.5 108.5,714.5 122.5,715.5 135.5,717.5 143.5,717.5 131.5,718.5 118.5,720.5 104.5,722.5 91.5,724.5 86.5,725.5 94.5,727.5 115.5,728.5 152.5,728.5 211.5,730.5 249.5,731.5" stroke="#e07800"/>
<polyline points="131.5,719.5 177.5,719.5 211.5,720.5 247.5,721.5 353.5,722.5" stroke="#ffff00"/>
<polyline points="102.5,731.5 132.5,731.5 152.5,729.5 211.5,729.5 250.5,729.5 309.5,727.5 331.5,725.5 353.5,722.5" stroke="#ffff00"/>
<polyline points="211.5,727.5 247.5,726.5 291.5,723.5 353.5,722.5" stroke="#ffff00"/>
<polyline points="247.5,722.5 257.5,723.5 323.5,724.5 353.5,722.5" stroke="#ffff00"/>
<path d="M561.0 711.5h5M563.5 709.0v5M596.0 709.5h5M598.5 707.0v5M85.0 725.5h5M87.5 723.0v5M102.0 722.5h5M104.5 720.0v5M92.0 727.5h5M94.5 725.0v5M100.0 731.5h5M102.5 729.0v5M106.0 731.5h5M108.5 729.0v5M209.0 729.5h5M211.5 727.0v5M248.0 729.5h5M250.5 727.0v5M307.0 727.5h5M309.5 725.0v5M329.0 725.5h5M331.5 723.0v5M255.0 723.5h5M257.5 721.0v5M289.0 723.5h5M291.5 721.0v5M321.0 724.5h5M323.5 722.0v5M175.0 719.5h5M177.5 717.0v5M141.0 717.5h5M143.5 715.0v5" stroke="#fff" fill="none"/>
<path d="M146.0 50.5h5M148.5 48.0v5M178.0 62.5h5M180.5 60.0v5M185.0 63.5h5M187.5 61.0v5M197.0 67.5h5M199.5 65.0v5M212.0 107.5h5M214.5 105.0v5M221.0 133.5h5M223.5 131.0v5M221.0 135.5h5M223.5 133.0v5M239.0 178.5h5M241.5 176.0v5M245.0 188.5h5M247.5 186.0v5M245.0 191.5h5M247.5 189.0v5M239.0 202.5h5M241.5 200.0v5M239.0 210.5h5M241.5 208.0v5M239.0 218.5h5M241.5 216.0v5M179.0 226.5h5M181.5 224.0v5M161.0 228.5h5M163.5 226.0v5M178.0 249.5h5M180.5 247.0v5M191.0 251.5h5M193.5 249.0v5M293.0 266.5h5M295.5 264.0v5M346.0 274.5h5M348.5 272.0v5M449.0 299.5h5M451.5 297.0v5M473.0 313.5h5M475.5 311.0v5M473.0 323.5h5M475.5 321.0v5M461.0 336.5h5M463.5 334.0v5M473.0 356.5h5M475.5 354.0v5M473.0 373.5h5M475.5 371.0v5M478.0 394.5h5M480.5 392.0v5M479.0 396.5h5M481.5 394.0v5M491.0 415.5h5M493.5 413.0v5M485.0 427.5h5M487.5 425.0v5M485.0 434.5h5M487.5 432.0v5M485.0 449.5h5M487.5 447.0v5M479.0 455.5h5M481.5 453.0v5M455.0 468.5h5M457.5 466.0v5M449.0 478.5h5M451.5 476.0v5M437.0 501.5h5M439.5 499.0v5M436.0 508.5h5M438.5 506.0v5M431.0 529.5h5M433.5 527.0v5M421.0 534.5h5M423.5 532.0v5M395.0 543.5h5M397.5 541.0v5M383.0 553.5h5M385.5 551.0v5M365.0 563.5h5M367.5 561.0v5M353.0 570.5h5M355.5 568.0v5M389.0 579.5h5M391.5 577.0v5M414.0 583.5h5M416.5 581.0v5M425.0 595.5h5M427.5 593.0v5M413.0 601.5h5M415.5 599.0v5M377.0 612.5h5M379.5 610.0v5M359.0 619.5h5M361.5 617.0v5M329.0 631.5h5M331.5 629.0v5M311.0 641.5h5M313.5 639.0v5M305.0 648.5h5M307.5 646.0v5M299.0 658.5h5M301.5 656.0v5M287.0 661.5h5M289.5 659.0v5M269.0 665.5h5M271.5 663.0v5M257.0 667.5h5M259.5 665.0v5M246.0 672.5h5M248.5 670.0v5M221.0 683.5h5M223.5 681.0v5M209.0 686.5h5M211.5 684.0v5M205.0 687.5h5M207.5 685.0v5M173.0 694.5h5M175.5 692.0v5M143.0 705.5h5M145.5 703.0v5M137.0 706.5h5M139.5 704.0v5M130.0 708.5h5M132.5 706.0v5M137.0 710.5h5M139.5 708.0v5M142.0 716.5h5M144.5 714.0v5M149.0 722.5h5M151.5 720.0v5M149.0 725.5h5M151.5 723.0v5M132.0 727.5h5M134.5 725.0v5M120.0 729.5h5M122.5 727.0v5M108.0 731.5h5M110.5 729.0v5" stroke="#fff" fill="none"/>
<path d="M202.0 50.5h5M204.5 48.0v5M178.0 62.5h5M180.5 60.0v5M171.0 67.5h5M173.5 65.0v5M212.0 107.5h5M214.5 105.0v5M246.0 132.5h5M248.5 130.0v5M250.0 136.5h5M252.5 134.0v5M164.0 177.5h5M166.5 175.0v5M135.0 188.5h5M137.5 186.0v5M145.0 191.5h5M147.5 189.0v5M176.0 202.5h5M178.5 200.0v5M198.0 210.5h5M200.5 208.0v5M198.0 218.5h5M200.5 216.0v5M215.0 225.5h5M217.5 223.0v5M220.0 228.5h5M222.5 226.0v5M169.0 249.5h5M171.5 247.0v5M161.0 251.5h5M163.5 249.0v5M142.0 266.5h5M144.5 264.0v5M172.0 274.5h5M174.5 272.0v5M208.0 282.5h5M210.5 280.0v5M276.0 299.5h5M278.5 297.0v5M325.0 314.5h5M327.5 312.0v5M326.0 320.5h5M328.5 318.0v5M330.0 337.5h5M332.5 335.0v5M340.0 356.5h5M342.5 354.0v5M340.0 373.5h5M342.5 371.0v5M346.0 394.5h5M348.5 392.0v5M331.0 396.5h5M333.5 394.0v5M328.0 415.5h5M330.5 413.0v5M323.0 427.5h5M325.5 425.0v5M323.0 434.5h5M325.5 432.0v5M323.0 451.5h5M325.5 449.0v5M324.0 455.5h5M326.5 453.0v5M324.0 468.5h5M326.5 466.0v5M310.0 478.5h5M312.5 476.0v5M278.0 501.5h5M280.5 499.0v5M278.0 508.5h5M280.5 506.0v5M272.0 530.5h5M274.5 528.0v5M227.0 543.5h5M229.5 541.0v5M211.0 553.5h5M213.5 551.0v5M190.0 563.5h5M192.5 561.0v5M177.0 570.5h5M179.5 568.0v5M217.0 579.5h5M219.5 577.0v5M243.0 583.5h5M245.5 581.0v5M254.0 595.5h5M256.5 593.0v5M239.0 601.5h5M241.5 599.0v5M204.0 612.5h5M206.5 610.0v5M182.0 619.5h5M184.5 617.0v5M157.0 631.5h5M159.5 629.0v5M142.0 639.5h5M144.5 637.0v5M124.0 648.5h5M126.5 646.0v5M106.0 657.5h5M108.5 655.0v5M103.0 660.5h5M105.5 658.0v5M102.0 667.5h5M104.5 665.0v5M142.0 673.5h5M144.5 671.0v5M195.0 683.5h5M197.5 681.0v5M205.0 686.5h5M207.5 684.0v5M209.0 687.5h5M211.5 685.0v5M228.0 694.5h5M230.5 692.0v5M287.0 705.5h5M289.5 703.0v5M289.0 706.5h5M291.5 704.0v5M297.0 708.5h5M299.5 706.0v5M318.0 711.5h5M320.5 709.0v5M342.0 716.5h5M344.5 714.0v5M350.0 722.5h5M352.5 720.0v5M346.0 725.5h5M348.5 723.0v5M322.0 727.5h5M324.5 725.0v5M290.0 731.5h5M292.5 729.0v5" stroke="#fff" fill="none"/>
<path d="M326.0 321.5h5M328.5 319.0v5M320.0 337.5h5M322.5 335.0v5M315.0 356.5h5M317.5 354.0v5M310.0 373.5h5M312.5 371.0v5M306.0 395.5h5M308.5 393.0v5M302.0 415.5h5M304.5 413.0v5M298.0 427.5h5M300.5 425.0v5M298.0 434.5h5M300.5 432.0v5M295.0 449.5h5M297.5 447.0v5M297.0 455.5h5M299.5 453.0v5M296.0 468.5h5M298.5 466.0v5M293.0 478.5h5M295.5 476.0v5M278.0 501.5h5M280.5 499.0v5M275.0 508.5h5M277.5 506.0v5M270.0 529.5h5M272.5 527.0v5M266.0 543.5h5M268.5 541.0v5M263.0 553.5h5M265.5 551.0v5M397.0 563.5h5M399.5 561.0v5M333.0 570.5h5M335.5 568.0v5M327.0 571.5h5M329.5 569.0v5M361.0 579.5h5M363.5 577.0v5M367.0 582.5h5M369.5 580.0v5M371.0 585.5h5M373.5 583.0v5M369.0 595.5h5M371.5 593.0v5M367.0 601.5h5M369.5 599.0v5M400.0 612.5h5M402.5 610.0v5M406.0 619.5h5M408.5 617.0v5M416.0 631.5h5M418.5 629.0v5M410.0 641.5h5M412.5 639.0v5M415.0 648.5h5M417.5 646.0v5M413.0 659.5h5M415.5 657.0v5M413.0 667.5h5M415.5 665.0v5M411.0 673.5h5M413.5 671.0v5M406.0 684.5h5M408.5 682.0v5M406.0 686.5h5M408.5 684.0v5M417.0 707.5h5M419.5 705.0v5M419.0 711.5h5M421.5 709.0v5M457.0 717.5h5M459.5 715.0v5M465.0 722.5h5M467.5 720.0v5M470.0 726.5h5M472.5 724.0v5M459.0 731.5h5M461.5 729.0v5" stroke="#fff" fill="none"/>
<path d="M659.0 110.5h5M661.5 108.0v5M623.0 132.5h5M625.5 130.0v5M620.0 136.5h5M622.5 134.0v5M585.0 177.5h5M587.5 175.0v5M568.0 188.5h5M570.5 186.0v5M563.0 191.5h5M565.5 189.0v5M523.0 202.5h5M525.5 200.0v5M518.0 210.5h5M520.5 208.0v5M511.0 218.5h5M513.5 216.0v5M506.0 226.5h5M508.5 224.0v5M505.0 228.5h5M507.5 226.0v5M494.0 250.5h5M496.5 248.0v5M451.0 266.5h5M453.5 264.0v5M439.0 274.5h5M441.5 272.0v5M426.0 282.5h5M428.5 280.0v5M408.0 299.5h5M410.5 297.0v5M401.0 315.5h5M403.5 313.0v5M392.0 334.5h5M394.5 332.0v5M392.0 336.5h5M394.5 334.0v5M390.0 356.5h5M392.5 354.0v5M388.0 373.5h5M390.5 371.0v5M391.0 395.5h5M393.5 393.0v5M394.0 415.5h5M396.5 413.0v5M395.0 427.5h5M397.5 425.0v5M396.0 434.5h5M398.5 432.0v5M397.0 450.5h5M399.5 448.0v5M400.0 455.5h5M402.5 453.0v5M405.0 468.5h5M407.5 466.0v5M407.0 478.5h5M409.5 476.0v5M410.0 501.5h5M412.5 499.0v5M412.0 507.5h5M414.5 505.0v5M421.0 529.5h5M423.5 527.0v5M423.0 543.5h5M425.5 541.0v5M425.0 553.5h5M427.5 551.0v5M423.0 563.5h5M425.5 561.0v5M425.0 570.5h5M427.5 568.0v5M421.0 579.5h5M423.5 577.0v5M425.0 583.5h5M427.5 581.0v5M431.0 595.5h5M433.5 593.0v5M432.0 601.5h5M434.5 599.0v5M436.0 612.5h5M438.5 610.0v5M440.0 619.5h5M442.5 617.0v5M446.0 631.5h5M448.5 629.0v5M449.0 640.5h5M451.5 638.0v5M451.0 648.5h5M453.5 646.0v5M454.0 659.5h5M456.5 657.0v5M456.0 667.5h5M458.5 665.0v5M460.0 673.5h5M462.5 671.0v5M468.0 684.5h5M470.5 682.0v5M470.0 686.5h5M472.5 684.0v5M474.0 699.5h5M476.5 697.0v5M475.0 707.5h5M477.5 705.0v5M479.0 710.5h5M481.5 708.0v5M482.0 716.5h5M484.5 714.0v5M483.0 723.5h5M485.5 721.0v5M485.0 726.5h5M487.5 724.0v5M475.0 731.5h5M477.5 729.0v5" stroke="#fff" fill="none"/>
<polyline points="148.5,50.5 180.5,62.5 187.5,63.5 199.5,67.5 214.5,107.5 223.5,133.5 223.5,135.5 241.5,178.5 247.5,188.5 247.5,191.5 241.5,202.5 241.5,210.5 241.5,218.5 181.5,226.5 163.5,228.5 180.5,249.5 193.5,251.5 295.5,266.5 348.5,274.5 451.5,299.5 475.5,313.5 475.5,323.5 463.5,336.5 475.5,356.5 475.5,373.5 480.5,394.5 481.5,396.5 493.5,415.5 487.5,427.5 487.5,434.5 487.5,449.5 481.5,455.5 457.5,468.5 451.5,478.5 439.5,501.5 438.5,508.5 433.5,529.5 423.5,534.5 397.5,543.5 385.5,553.5 367.5,563.5 355.5,570.5 391.5,579.5 416.5,583.5 427.5,595.5 415.5,601.5 379.5,612.5 361.5,619.5 331.5,631.5 313.5,641.5 307.5,648.5 301.5,658.5 289.5,661.5 271.5,665.5 259.5,667.5 248.5,672.5 223.5,683.5 211.5,686.5 207.5,687.5 175.5,694.5 145.5,705.5 139.5,706.5 132.5,708.5 139.5,710.5 144.5,716.5 151.5,722.5 151.5,725.5 134.5,727.5 122.5,729.5 110.5,731.5" stroke="#00ff00"/>
<polyline points="204.5,50.5 180.5,62.5 173.5,67.5 214.5,107.5 248.5,132.5 252.5,136.5 166.5,177.5 137.5,188.5 147.5,191.5 178.5,202.5 200.5,210.5 200.5,218.5 217.5,225.5 222.5,228.5 171.5,249.5 163.5,251.5 144.5,266.5 174.5,274.5 210.5,282.5 278.5,299.5 327.5,314.5 328.5,320.5 332.5,337.5 342.5,356.5 342.5,373.5 348.5,394.5 333.5,396.5 330.5,415.5 325.5,427.5 325.5,434.5 325.5,451.5 326.5,455.5 326.5,468.5 312.5,478.5 280.5,501.5 280.5,508.5 274.5,530.5 229.5,543.5 213.5,553.5 192.5,563.5 179.5,570.5 219.5,579.5 245.5,583.5 256.5,595.5 241.5,601.5 206.5,612.5 184.5,619.5 159.5,631.5 144.5,639.5 126.5,648.5 108.5,657.5 105.5,660.5 104.5,667.5 144.5,673.5 197.5,683.5 207.5,686.5 211.5,687.5 230.5,694.5 289.5,705.5 291.5,706.5 299.5,708.5 320.5,711.5 344.5,716.5 352.5,722.5 348.5,725.5 324.5,727.5 292.5,731.5" stroke="#ff0080"/>
<polyline points="328.5,321.5 322.5,337.5 317.5,356.5 312.5,373.5 308.5,395.5 304.5,415.5 300.5,427.5 300.5,434.5 297.5,449.5 299.5,455.5 298.5,468.5 295.5,478.5 280.5,501.5 277.5,508.5 272.5,529.5 268.5,543.5 265.5,553.5 399.5,563.5 335.5,570.5 329.5,571.5 363.5,579.5 369.5,582.5 373.5,585.5 371.5,595.5 369.5,601.5 402.5,612.5 408.5,619.5 418.5,631.5 412.5,641.5 417.5,648.5 415.5,659.5 415.5,667.5 413.5,673.5 408.5,684.5 408.5,686.5 419.5,707.5 421.5,711.5 459.5,717.5 467.5,722.5 472.5,726.5 461.5,731.5" stroke="#00ffff"/>
<polyline points="661.5,110.5 625.5,132.5 622.5,136.5 587.5,177.5 570.5,188.5 565.5,191.5 525.5,202.5 520.5,210.5 513.5,218.5 508.5,226.5 507.5,228.5 496.5,250.5 453.5,266.5 441.5,274.5 428.5,282.5 410.5,299.5 403.5,315.5 394.5,334.5 394.5,336.5 392.5,356.5 390.5,373.5 393.5,395.5 396.5,415.5 397.5,427.5 398.5,434.5 399.5,450.5 402.5,455.5 407.5,468.5 409.5,478.5 412.5,501.5 414.5,507.5 423.5,529.5 425.5,543.5 427.5,553.5 425.5,563.5 427.5,570.5 423.5,579.5 427.5,583.5 433.5,595.5 434.5,601.5 438.5,612.5 442.5,619.5 448.5,631.5 451.5,640.5 453.5,648.5 456.5,659.5 458.5,667.5 462.5,673.5 470.5,684.5 472.5,686.5 476.5,699.5 477.5,707.5 481.5,710.5 484.5,716.5 485.5,723.5 487.5,726.5 477.5,731.5" stroke="#ff0000"/>
</g>
<rect x="67.5" y="607.5" width="43" height="17" fill="#000" stroke="#ffff00"/>
<text x="71.5" y="620.6" fill="#ffff00" font-size="12.5" textLength="34.5" lengthAdjust="spacingAndGlyphs">CAPE</text>
<rect x="67.5" y="636.5" width="57" height="17" fill="#000" stroke="#e07800"/>
<text x="71.5" y="649.5" fill="#e07800" font-size="12.5" textLength="48.5" lengthAdjust="spacingAndGlyphs">CINH * 5</text>
<rect x="625.5" y="697.5" width="30" height="17" fill="#000" stroke="#ff00ff"/>
<text x="629" y="711" fill="#ff00ff" font-size="12.5">LCL</text>
<text x="747.7" y="31.8" fill="#00ff00" font-weight="bold" font-size="12.5" textLength="26.6" lengthAdjust="spacingAndGlyphs">OBS</text>
<text x="817.6" y="31.8" fill="#ff0080" font-weight="bold" font-size="12.5" textLength="17.2" lengthAdjust="spacingAndGlyphs">SR</text>
<line x1="761.5" y1="40" x2="761.5" y2="769" stroke="#00ff00"/>
<line x1="826.5" y1="40" x2="826.5" y2="769" stroke="#ff0080"/>
<path d="M761.5 62.5L748.5 91.5M761.5 67.5L749.5 95.5M761.5 107.5L757.5 136.5M761.5 133.5L764.5 163.5M761.5 135.5L764.5 165.5M761.5 178.5L748.5 203.5M761.5 188.5L745.5 212.5M761.5 191.5L746.5 215.5M761.5 202.5L750.5 229.5M761.5 210.5L753.5 239.5M761.5 218.5L754.5 246.5M761.5 225.5L758.5 252.5M761.5 228.5L759.5 256.5M761.5 249.5L747.5 274.5M761.5 251.5L747.5 276.5M761.5 266.5L744.5 289.5M761.5 274.5L743.5 296.5M761.5 282.5L744.5 305.5M761.5 299.5L745.5 323.5M761.5 313.5L747.5 341.5M761.5 323.5L748.5 349.5M761.5 336.5L751.5 364.5M761.5 356.5L751.5 383.5M761.5 373.5L751.5 401.5M761.5 394.5L748.5 420.5M761.5 396.5L749.5 422.5M761.5 415.5L746.5 440.5M761.5 427.5L747.5 452.5M761.5 434.5L746.5 459.5M761.5 449.5L747.5 473.5M761.5 455.5L748.5 481.5M761.5 468.5L751.5 495.5M761.5 478.5L749.5 505.5M761.5 501.5L747.5 526.5M761.5 508.5L747.5 533.5M761.5 529.5L747.5 555.5M761.5 534.5L747.5 560.5M761.5 543.5L745.5 567.5M761.5 553.5L744.5 576.5M761.5 563.5L743.5 585.5M761.5 570.5L743.5 593.5M761.5 579.5L744.5 602.5M761.5 583.5L745.5 608.5M761.5 595.5L745.5 619.5M761.5 601.5L745.5 625.5M761.5 612.5L744.5 636.5M761.5 619.5L744.5 641.5M761.5 631.5L743.5 653.5M761.5 640.5L742.5 660.5M761.5 648.5L741.5 669.5M761.5 658.5L740.5 676.5M761.5 661.5L740.5 680.5M761.5 665.5L741.5 684.5M761.5 667.5L741.5 687.5M761.5 672.5L742.5 690.5M761.5 683.5L746.5 697.5M761.5 686.5L754.5 713.5M761.5 687.5L755.5 714.5M761.5 705.5L780.5 727.5M761.5 706.5L782.5 726.5M761.5 708.5L785.5 725.5M761.5 710.5L789.5 720.5M761.5 716.5L789.5 710.5M761.5 722.5L784.5 705.5M761.5 725.5L781.5 703.5M761.5 727.5L777.5 701.5M761.5 729.5L771.5 700.5M826.5 62.5L856.5 64.5M826.5 67.5L856.5 71.5M826.5 107.5L855.5 115.5M826.5 133.5L855.5 140.5M826.5 135.5L855.5 144.5M826.5 178.5L851.5 191.5M826.5 188.5L850.5 204.5M826.5 191.5L850.5 207.5M826.5 202.5L851.5 216.5M826.5 210.5L853.5 223.5M826.5 218.5L853.5 231.5M826.5 225.5L856.5 227.5M826.5 228.5L856.5 229.5M826.5 249.5L856.5 248.5M826.5 251.5L856.5 252.5M826.5 266.5L836.5 293.5M826.5 274.5L822.5 303.5M826.5 282.5L820.5 310.5M826.5 299.5L819.5 328.5M826.5 313.5L826.5 343.5M826.5 323.5L826.5 352.5M826.5 336.5L831.5 365.5M826.5 356.5L830.5 385.5M826.5 373.5L829.5 402.5M826.5 396.5L830.5 425.5M826.5 415.5L825.5 445.5M826.5 427.5L822.5 456.5M826.5 434.5L821.5 463.5M826.5 449.5L823.5 478.5M826.5 455.5L822.5 484.5M826.5 468.5L822.5 497.5M826.5 478.5L823.5 507.5M826.5 501.5L822.5 530.5M826.5 508.5L821.5 537.5M826.5 529.5L822.5 558.5M826.5 543.5L822.5 572.5M826.5 553.5L821.5 582.5M826.5 563.5L823.5 592.5M826.5 570.5L822.5 599.5M826.5 579.5L823.5 608.5M826.5 583.5L822.5 612.5M826.5 595.5L821.5 624.5M826.5 601.5L822.5 630.5M826.5 612.5L821.5 641.5M826.5 619.5L821.5 648.5M826.5 631.5L822.5 660.5M826.5 640.5L822.5 669.5M826.5 648.5L823.5 677.5M826.5 658.5L823.5 687.5M826.5 663.5L817.5 686.5M826.5 669.5L850.5 689.5M826.5 674.5L840.5 690.5M826.5 683.5L855.5 694.5M826.5 687.5L855.5 695.5M826.5 694.5L856.5 695.5M826.5 705.5L854.5 699.5M826.5 707.5L854.5 700.5M826.5 711.5L852.5 703.5M826.5 717.5L852.5 704.5M826.5 723.5L850.5 708.5M826.5 727.5L847.5 712.5M826.5 730.5L845.5 714.5M761.5 684L761.5 731" stroke="#fff" fill="none"/>
<text x="894.5" y="39.5" fill="#ffffff" font-size="12.5" textLength="59.3" lengthAdjust="spacingAndGlyphs">Parameter</text>
<line x1="894" y1="41.5" x2="954" y2="41.5" stroke="#fff"/>
<text x="1124" y="39.5" fill="#ffffff" font-size="12.5" text-anchor="end">Value LCL</text>
<line x1="1064" y1="41.5" x2="1124" y2="41.5" stroke="#fff"/>
<text x="1214" y="39.5" fill="#ffffff" font-size="12.5" text-anchor="end">Value CCL</text>
<line x1="1152" y1="41.5" x2="1214" y2="41.5" stroke="#fff"/>
<text x="1230" y="39.5" fill="#ffffff" font-size="12.5">Unit</text>
<line x1="1230" y1="41.5" x2="1253" y2="41.5" stroke="#fff"/>
<text x="894.5" y="61.5" fill="#ffffff" font-size="12.5" textLength="138.8" lengthAdjust="spacingAndGlyphs">Convective Temperature:</text>
<text x="1124" y="61.5" fill="#ff0000" font-size="12.5" text-anchor="end">26.67</text>
<text x="1230" y="61.5" fill="#ffffff" font-size="12.5">[°C]</text>
<text x="894.5" y="78.5" fill="#ffffff" font-size="12.5" textLength="91" lengthAdjust="spacingAndGlyphs">Snowfall Height:</text>
<text x="1124" y="78.5" fill="#ffffff" font-size="12.5" text-anchor="end">3066.02</text>
<text x="1230" y="78.5" fill="#ffffff" font-size="12.5">[m]</text>
<text x="894.5" y="103.7" fill="#ffffff" font-size="12.5" textLength="265.5" lengthAdjust="spacingAndGlyphs">Parcels: Using 100mB mean layer LCL + CCL</text>
<line x1="894" y1="105.5" x2="1160" y2="105.5" stroke="#fff"/>
<text x="894.5" y="123.6" fill="#ffffff" font-size="12.5" textLength="67.9" lengthAdjust="spacingAndGlyphs">Lifted Index:</text>
<text x="1124" y="123.6" fill="#ff0000" font-size="12.5" text-anchor="end">-2.70</text>
<text x="1214" y="123.6" fill="#ff0000" font-size="12.5" text-anchor="end">-5.45</text>
<text x="1230" y="123.6" fill="#ffffff" font-size="12.5">[°C]</text>
<text x="894.5" y="140.6" fill="#ffffff" font-size="12.5" textLength="38.3" lengthAdjust="spacingAndGlyphs">CAPE:</text>
<text x="1124" y="140.6" fill="#ff0000" font-size="12.5" text-anchor="end">309.77</text>
<text x="1214" y="140.6" fill="#ff0000" font-size="12.5" text-anchor="end">1427.04</text>
<text x="1230" y="140.6" fill="#ffffff" font-size="12.5">[J/kg]</text>
<text x="894.5" y="157.6" fill="#ffffff" font-size="12.5" textLength="32.3" lengthAdjust="spacingAndGlyphs">CINH:</text>
<text x="1124" y="157.6" fill="#ffff00" font-size="12.5" text-anchor="end">101.29</text>
<text x="1230" y="157.6" fill="#ffffff" font-size="12.5">[J/kg]</text>
<text x="894.5" y="174.6" fill="#ffffff" font-size="12.5" textLength="66.4" lengthAdjust="spacingAndGlyphs">CAPE Virt.:</text>
<text x="1124" y="174.6" fill="#ff0000" font-size="12.5" text-anchor="end">376.12</text>
<text x="1214" y="174.6" fill="#ff0000" font-size="12.5" text-anchor="end">1045.84</text>
<text x="1230" y="174.6" fill="#ffffff" font-size="12.5">[J/kg]</text>
<text x="894.5" y="191.6" fill="#ffffff" font-size="12.5" textLength="60.6" lengthAdjust="spacingAndGlyphs">CINH Virt.:</text>
<text x="1124" y="191.6" fill="#ff0000" font-size="12.5" text-anchor="end">61.75</text>
<text x="1230" y="191.6" fill="#ffffff" font-size="12.5">[J/kg]</text>
<text x="894.5" y="208.6" fill="#ffffff" font-size="12.5" textLength="140.2" lengthAdjust="spacingAndGlyphs">DCAPE (LFS = 500mB):</text>
<text x="1124" y="208.6" fill="#ff0000" font-size="12.5" text-anchor="end">586.41</text>
<text x="1230" y="208.6" fill="#ffffff" font-size="12.5">[J/kg]</text>
<text x="894.5" y="225.6" fill="#ffffff" font-size="12.5" textLength="119.5" lengthAdjust="spacingAndGlyphs">850-600 Lapse Rate:</text>
<text x="1124" y="225.6" fill="#ffff00" font-size="12.5" text-anchor="end">17.98</text>
<text x="1230" y="225.6" fill="#ffffff" font-size="12.5">[°C]</text>
<text x="894.5" y="242.6" fill="#ffffff" font-size="12.5" textLength="145.4" lengthAdjust="spacingAndGlyphs">Fawbush-Miller Hail Size:</text>
<text x="1124" y="242.6" fill="#ffff00" font-size="12.5" text-anchor="end">1.3 - 1.9</text>
<text x="1230" y="242.6" fill="#ffffff" font-size="12.5">[cm]</text>
<text x="894.5" y="259.6" fill="#ffffff" font-size="12.5" textLength="139.3" lengthAdjust="spacingAndGlyphs">Sig. Hail Param. (SHIP):</text>
<text x="1124" y="259.6" fill="#ff0000" font-size="12.5" text-anchor="end">2.30</text>
<text x="1230" y="259.6" fill="#ffffff" font-size="12.5">[1]</text>
<text x="894.5" y="276.6" fill="#ffffff" font-size="12.5" textLength="185.7" lengthAdjust="spacingAndGlyphs">Max. Hail Size (new, new2, old):</text>
<text x="1124" y="276.6" fill="#ff0000" font-size="12.5" text-anchor="end">4.94</text>
<text x="1230" y="276.6" fill="#ffffff" font-size="12.5">[cm]</text>
<text x="1124" y="276.6" fill="#ffffff" font-size="12.5">,</text>
<text x="1135" y="276.6" fill="#ff0000" font-size="12.5">5.38</text>
<text x="1159.5" y="276.6" fill="#ffffff" font-size="12.5">,</text>
<text x="1173" y="276.6" fill="#ff0000" font-size="12.5">4.36</text>
<text x="894.5" y="296.8" fill="#ffffff" font-size="12.5" textLength="100.3" lengthAdjust="spacingAndGlyphs">LCL / CCL (AGL):</text>
<text x="1124" y="296.8" fill="#ffff00" font-size="12.5" text-anchor="end">1019.30</text>
<text x="1214" y="296.8" fill="#ffff00" font-size="12.5" text-anchor="end">1633.05</text>
<text x="1230" y="296.8" fill="#ffffff" font-size="12.5">[m]</text>
<text x="894.5" y="313.7" fill="#ffffff" font-size="12.5" textLength="104" lengthAdjust="spacingAndGlyphs">Convective Height:</text>
<text x="1124" y="313.7" fill="#ff0000" font-size="12.5" text-anchor="end">9.28</text>
<text x="1214" y="313.7" fill="#ff0000" font-size="12.5" text-anchor="end">10.09</text>
<text x="1230" y="313.7" fill="#ffffff" font-size="12.5">[km]</text>
<text x="894.5" y="338.4" fill="#ffffff" font-size="12.5" textLength="105.5" lengthAdjust="spacingAndGlyphs">Convective Indices</text>
<line x1="894" y1="340.5" x2="999" y2="340.5" stroke="#fff"/>
<text x="894.5" y="358.4" fill="#ffffff" font-size="12.5" textLength="93.9" lengthAdjust="spacingAndGlyphs">Showalter Index:</text>
<text x="1124" y="358.4" fill="#ffff00" font-size="12.5" text-anchor="end">2.40</text>
<text x="1230" y="358.4" fill="#ffffff" font-size="12.5">[°C]</text>
<text x="894.5" y="375.4" fill="#ffffff" font-size="12.5" textLength="148.9" lengthAdjust="spacingAndGlyphs">Modified Thompson Index:</text>
<text x="1124" y="375.4" fill="#ff0000" font-size="12.5" text-anchor="end">39.26</text>
<text x="1230" y="375.4" fill="#ffffff" font-size="12.5">[°C]</text>
<text x="894.5" y="392.4" fill="#ffffff" font-size="12.5" textLength="104" lengthAdjust="spacingAndGlyphs">Total Totals Index:</text>
<text x="1124" y="392.4" fill="#ffff00" font-size="12.5" text-anchor="end">47.40</text>
<text x="1230" y="392.4" fill="#ffffff" font-size="12.5">[°C]</text>
<text x="894.5" y="409.4" fill="#ffffff" font-size="12.5" textLength="56.3" lengthAdjust="spacingAndGlyphs">KO Index:</text>
<text x="1124" y="409.4" fill="#ffff00" font-size="12.5" text-anchor="end">-6.27</text>
<text x="1230" y="409.4" fill="#ffffff" font-size="12.5">[1]</text>
<text x="894.5" y="426.4" fill="#ffffff" font-size="12.5" textLength="122" lengthAdjust="spacingAndGlyphs">Craven SigSvr / 1000:</text>
<text x="1124" y="426.4" fill="#ff0000" font-size="12.5" text-anchor="end">9.26</text>
<text x="1230" y="426.4" fill="#ffffff" font-size="12.5">[m^3/s^3]</text>
<text x="894.5" y="443.4" fill="#ffffff" font-size="12.5" textLength="113.3" lengthAdjust="spacingAndGlyphs">SCP RM (new, old):</text>
<text x="1124" y="443.4" fill="#ff0000" font-size="12.5" text-anchor="end">6.03</text>
<text x="1230" y="443.4" fill="#ffffff" font-size="12.5">[1]</text>
<text x="1124" y="443.4" fill="#ffffff" font-size="12.5">,</text>
<text x="1135.8" y="443.4" fill="#ff0000" font-size="12.5">33.45</text>
<text x="894.5" y="460.4" fill="#ffffff" font-size="12.5" textLength="111.3" lengthAdjust="spacingAndGlyphs">SCP LM (new, old):</text>
<text x="1124" y="460.4" fill="#ff0000" font-size="12.5" text-anchor="end">5.49</text>
<text x="1230" y="460.4" fill="#ffffff" font-size="12.5">[1]</text>
<text x="1124" y="460.4" fill="#ffffff" font-size="12.5">,</text>
<text x="1135.8" y="460.4" fill="#ff0000" font-size="12.5">6.03</text>
<text x="894.5" y="477.4" fill="#ffffff" font-size="12.5" textLength="87.5" lengthAdjust="spacingAndGlyphs">STP (new, old):</text>
<text x="1124" y="477.4" fill="#ff0000" font-size="12.5" text-anchor="end">0.29</text>
<text x="1230" y="477.4" fill="#ffffff" font-size="12.5">[1]</text>
<text x="1124" y="477.4" fill="#ffffff" font-size="12.5">,</text>
<text x="1135.8" y="477.4" fill="#ff0000" font-size="12.5">0.86</text>
<text x="894.5" y="494.4" fill="#ffffff" font-size="12.5" textLength="74.2" lengthAdjust="spacingAndGlyphs">SB STP (fix):</text>
<text x="1124" y="494.4" fill="#ff0000" font-size="12.5" text-anchor="end">0.60</text>
<text x="1230" y="494.4" fill="#ffffff" font-size="12.5">[1]</text>
<text x="894.5" y="511.4" fill="#ffffff" font-size="12.5" textLength="130.1" lengthAdjust="spacingAndGlyphs">Derecho Comp Param:</text>
<text x="1124" y="511.4" fill="#ff0000" font-size="12.5" text-anchor="end">2.54</text>
<text x="1230" y="511.4" fill="#ffffff" font-size="12.5">[1]</text>
<text x="894.5" y="528.4" fill="#ffffff" font-size="12.5" textLength="151.2" lengthAdjust="spacingAndGlyphs">MCS 18m/s (MMP, MSP):</text>
<text x="1124" y="528.4" fill="#ff0000" font-size="12.5" text-anchor="end">99.41</text>
<text x="1230" y="528.4" fill="#ffffff" font-size="12.5">[%]</text>
<text x="1124" y="528.4" fill="#ffffff" font-size="12.5">,</text>
<text x="1135.8" y="528.4" fill="#ffffff" font-size="12.5">---</text>
<text x="894.5" y="545.4" fill="#ffffff" font-size="12.5" textLength="144" lengthAdjust="spacingAndGlyphs">Exp. Supercell Index CH:</text>
<text x="1124" y="545.4" fill="#ff0000" font-size="12.5" text-anchor="end">5.29</text>
<text x="1230" y="545.4" fill="#ffffff" font-size="12.5">[1]</text>
<text x="894.5" y="562.4" fill="#ffffff" font-size="12.5" textLength="98.2" lengthAdjust="spacingAndGlyphs">SWISS 12 Index:</text>
<text x="1124" y="562.4" fill="#ff0000" font-size="12.5" text-anchor="end">-14.46</text>
<text x="1230" y="562.4" fill="#ffffff" font-size="12.5">[1]</text>
<text x="894.5" y="587.6" fill="#ffffff" font-size="12.5" textLength="99.7" lengthAdjust="spacingAndGlyphs">Wind Parameters</text>
<line x1="894" y1="589.7" x2="995" y2="589.7" stroke="#fff"/>
<text x="894.5" y="607.3" fill="#ffffff" font-size="12.5" textLength="92.5" lengthAdjust="spacingAndGlyphs">Storm Direction:</text>
<text x="1124" y="607.3" fill="#ffffff" font-size="12.5" text-anchor="end">237.28</text>
<text x="1230" y="607.3" fill="#ffffff" font-size="12.5">[°]</text>
<text x="894.5" y="624.3" fill="#ffffff" font-size="12.5" textLength="80" lengthAdjust="spacingAndGlyphs">Storm Motion:</text>
<text x="1124" y="624.3" fill="#ff0000" font-size="12.5" text-anchor="end">33.61</text>
<text x="1230" y="624.3" fill="#ffffff" font-size="12.5">[knt]</text>
<text x="894.5" y="644.3" fill="#ffffff" font-size="12.5" textLength="106.1" lengthAdjust="spacingAndGlyphs">SR Wind Sfc-2km:</text>
<text x="1124" y="644.3" fill="#ff0000" font-size="12.5" text-anchor="end">35.61</text>
<text x="1230" y="644.3" fill="#ffffff" font-size="12.5">[knt]</text>
<text x="894.5" y="661.3" fill="#ffffff" font-size="12.5" textLength="112.1" lengthAdjust="spacingAndGlyphs">SR Wind 4km-6km:</text>
<text x="1124" y="661.3" fill="#ff0000" font-size="12.5" text-anchor="end">25.62</text>
<text x="1230" y="661.3" fill="#ffffff" font-size="12.5">[knt]</text>
<text x="894.5" y="678.3" fill="#ffffff" font-size="12.5" textLength="119.4" lengthAdjust="spacingAndGlyphs">SR Wind 9km-11km:</text>
<text x="1124" y="678.3" fill="#ff0000" font-size="12.5" text-anchor="end">45.23</text>
<text x="1230" y="678.3" fill="#ffffff" font-size="12.5">[knt] CL</text>
<text x="894.5" y="698.3" fill="#ffffff" font-size="12.5" textLength="120" lengthAdjust="spacingAndGlyphs">Effective Shear 6000:</text>
<text x="1124" y="698.3" fill="#ff0000" font-size="12.5" text-anchor="end">58.09</text>
<text x="1230" y="698.3" fill="#ffffff" font-size="12.5">[knt]</text>
<text x="894.5" y="718.3" fill="#ffffff" font-size="12.5" textLength="146" lengthAdjust="spacingAndGlyphs">Bulk Richardson Number:</text>
<text x="1124" y="718.3" fill="#00ff00" font-size="12.5" text-anchor="end">1.45</text>
<text x="1214" y="718.3" fill="#00ff00" font-size="12.5" text-anchor="end">6.68</text>
<text x="1230" y="718.3" fill="#ffffff" font-size="12.5">[1]</text>
<text x="894.5" y="738.3" fill="#ffffff" font-size="12.5" textLength="110.4" lengthAdjust="spacingAndGlyphs">3km Effective SRH:</text>
<text x="1124" y="738.3" fill="#ff0000" font-size="12.5" text-anchor="end">452.66</text>
<text x="1230" y="738.3" fill="#ffffff" font-size="12.5">[m^2/s^2]</text>
<text x="894.5" y="755.3" fill="#ffffff" font-size="12.5" textLength="147.5" lengthAdjust="spacingAndGlyphs">Max 3km SRH (Sfc-2km):</text>
<text x="1124" y="755.3" fill="#ff0000" font-size="12.5" text-anchor="end">452.66</text>
<text x="1230" y="755.3" fill="#ffffff" font-size="12.5">[m^2/s^2]</text>
<text x="894.5" y="772.3" fill="#ffffff" font-size="12.5" textLength="150.3" lengthAdjust="spacingAndGlyphs">Max 3km SRH Level AGL:</text>
<text x="1124" y="772.3" fill="#ff0000" font-size="12.5" text-anchor="end">0.00</text>
<text x="1230" y="772.3" fill="#ffffff" font-size="12.5">[m]</text>
<text x="894.5" y="792.3" fill="#ffffff" font-size="12.5" textLength="154.1" lengthAdjust="spacingAndGlyphs">3km Energy Helicity Index:</text>
<text x="1124" y="792.3" fill="#ff0000" font-size="12.5" text-anchor="end">0.88</text>
<text x="1214" y="792.3" fill="#ff0000" font-size="12.5" text-anchor="end">4.04</text>
<text x="1230" y="792.3" fill="#ffffff" font-size="12.5">[1]</text>
<text x="894.5" y="809.3" fill="#ffffff" font-size="12.5" textLength="139.6" lengthAdjust="spacingAndGlyphs">3km Vorticity Gen. Pot.:</text>
<text x="1124" y="809.3" fill="#00ff00" font-size="12.5" text-anchor="end">0.14</text>
<text x="1214" y="809.3" fill="#ff0000" font-size="12.5" text-anchor="end">0.30</text>
<text x="1230" y="809.3" fill="#ffffff" font-size="12.5">[m/s^2]</text>
<rect x="729" y="827" width="15" height="8" fill="#ff0000"/>
<text x="753" y="835.5" fill="#ff0000" font-size="12.5" textLength="111.2" lengthAdjust="spacingAndGlyphs">Temperature Profile</text>
<rect x="729" y="847" width="15" height="8" fill="#00ffff"/>
<text x="753" y="855.5" fill="#00ffff" font-size="12.5" textLength="92.1" lengthAdjust="spacingAndGlyphs">Dewpoint Profile</text>
<rect x="729" y="867" width="15" height="8" fill="#00ff00"/>
<text x="753" y="875.5" fill="#00ff00" font-size="12.5" textLength="136.2" lengthAdjust="spacingAndGlyphs">OBS Windspeed Profile</text>
<rect x="729" y="887" width="15" height="8" fill="#ff0080"/>
<text x="753" y="895.5" fill="#ff0080" font-size="12.5" textLength="126.2" lengthAdjust="spacingAndGlyphs">SR Windspeed Profile</text>
<rect x="729" y="907" width="15" height="8" fill="#c8c800"/>
<text x="753" y="915.5" fill="#c8c800" font-size="12.5" textLength="222.4" lengthAdjust="spacingAndGlyphs">Sfc-3km Storm Relative Helicity Profile</text>
<rect x="729" y="927" width="15" height="8" fill="#403c00"/>
<text x="753" y="935.5" fill="#403c00" font-size="12.5" textLength="204.3" lengthAdjust="spacingAndGlyphs">Effective Layer (CAPE &gt;= 100 J/kg)</text>
<rect x="1079" y="827" width="15" height="8" fill="#00ff00"/>
<text x="1103.5" y="835.5" fill="#00ff00" font-size="12.5" textLength="182.9" lengthAdjust="spacingAndGlyphs">No / Non Severe Thunderstorms</text>
<rect x="1079" y="847" width="15" height="8" fill="#ffff00"/>
<text x="1103.5" y="855.5" fill="#ffff00" font-size="12.5" textLength="211" lengthAdjust="spacingAndGlyphs">Scattered / Moderate Thunderstorms</text>
<rect x="1079" y="867" width="15" height="8" fill="#ff0000"/>
<text x="1103.5" y="875.5" fill="#ff0000" font-size="12.5" textLength="208.8" lengthAdjust="spacingAndGlyphs">Widespread / Severe Thunderstorms</text>
<line x1="61.5" y1="50" x2="61.5" y2="749" stroke="#fff"/>
<path d="M62 648.5h3M62 658.5h3M62 661.5h3M62 673.5h3M62 683.5h3M62 685.5h3M62 704.5h2M62 705.5h2M62 707.5h2M62 708.5h2" stroke="#fff"/>
</svg></body></html>
